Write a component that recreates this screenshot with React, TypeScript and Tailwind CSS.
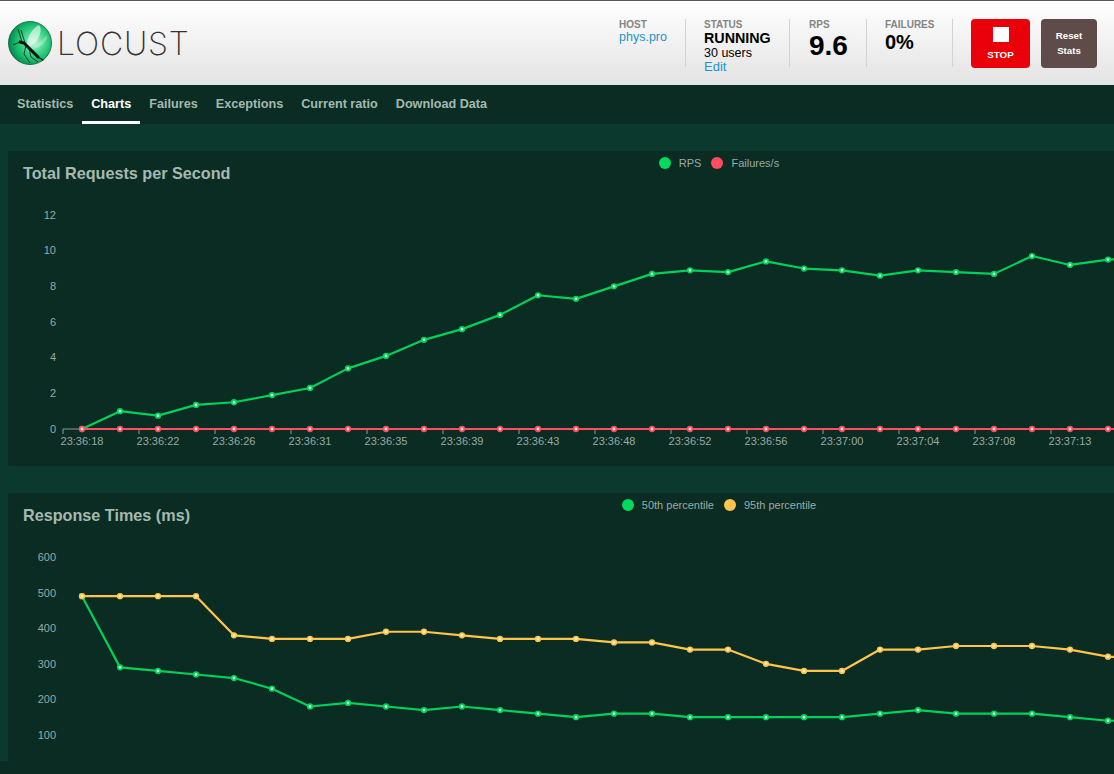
const tabs = ["Statistics", "Charts", "Failures", "Exceptions", "Current ratio", "Download Data"];

const rps = [0, 1, 0.75, 1.35, 1.5, 1.9, 2.3, 3.4, 4.1, 5, 5.6, 6.4, 7.5, 7.3, 8, 8.7, 8.9, 8.8, 9.4, 9, 8.9, 8.6, 8.9, 8.8, 8.7, 9.7, 9.2, 9.5, 9.6];
const failures = rps.map(() => 0);
const p50 = [490, 290, 280, 270, 260, 230, 180, 190, 180, 170, 180, 170, 160, 150, 160, 160, 150, 150, 150, 150, 150, 160, 170, 160, 160, 160, 150, 140, 140];
const p95 = [490, 490, 490, 490, 380, 370, 370, 370, 390, 390, 380, 370, 370, 370, 360, 360, 340, 340, 300, 280, 280, 340, 340, 350, 350, 350, 340, 320, 315];
const times = ["23:36:18", "23:36:22", "23:36:26", "23:36:31", "23:36:35", "23:36:39", "23:36:43", "23:36:48", "23:36:52", "23:36:56", "23:37:00", "23:37:04", "23:37:08", "23:37:13"];

const GREEN = "#00d15a";
const RED = "#ff4d5e";
const YELLOW = "#ffc54d";
const LABEL = "#9aa9a3";

const xAt = (i: number) => 82 + 38 * i;

function Series({ data, color, y, core }: { data: number[]; color: string; y: (v: number) => number; core: string }) {
  const points = data.map((v, i) => `${xAt(i)},${y(v)}`).join(" ");
  return (
    <g>
      <polyline points={points} fill="none" stroke={color} strokeWidth="2.2" strokeLinejoin="round" />
      {data.map((v, i) => (
        <circle key={i} cx={xAt(i)} cy={y(v)} r="2.3" fill={core} stroke={color} strokeWidth="1.7" />
      ))}
    </g>
  );
}

function Legend({ items }: { items: { label: string; color: string }[] }) {
  return (
    <div className="absolute left-0 right-0 top-[5.5px] flex justify-center gap-[10px] text-[11px] leading-[13px] text-[#9aaba3]">
      {items.map((item) => (
        <div key={item.label} className="flex items-center gap-[8px]">
          <svg width="12" height="12" viewBox="0 0 12 12">
            <circle cx="6" cy="6" r="6" fill={item.color} />
          </svg>
          <span>{item.label}</span>
        </div>
      ))}
    </div>
  );
}

function XAxis({ baseline }: { baseline: number }) {
  return (
    <g>
      <line x1="63" x2="1114" y1={baseline} y2={baseline} stroke="#8c9c95" strokeWidth="1" />
      {times.map((t, i) => (
        <g key={t}>
          <line x1={63 + 76 * i} x2={63 + 76 * i} y1={baseline} y2={baseline + 5} stroke="#8c9c95" strokeWidth="1" />
          <text x={xAt(i * 2)} y={baseline + 16} textAnchor="middle" fontSize="11" fill={LABEL}>
            {t}
          </text>
        </g>
      ))}
    </g>
  );
}

function RpsChart() {
  const y = (v: number) => 429 - v * 17.83;
  return (
    <svg className="block w-[1106px] h-[276px]" viewBox="8 190 1106 276">
      {[0, 2, 4, 6, 8, 10, 12].map((v) => (
        <text key={v} x="56" y={y(v) + 3.6} textAnchor="end" fontSize="11" fill={LABEL}>
          {v}
        </text>
      ))}
      <XAxis baseline={429} />
      <Series data={rps} color={GREEN} y={y} core="#b8ffd4" />
      <Series data={failures} color={RED} y={y} core="#ffe3e6" />
    </svg>
  );
}

function ResponseChart() {
  const y = (v: number) => 770.6 - v * 0.356;
  return (
    <svg className="block w-[1106px] h-[229px]" viewBox="8 532 1106 229">
      {[100, 200, 300, 400, 500, 600].map((v) => (
        <text key={v} x="56" y={y(v) + 4} textAnchor="end" fontSize="11" fill={LABEL}>
          {v}
        </text>
      ))}
      <Series data={p50} color={GREEN} y={y} core="#b8ffd4" />
      <Series data={p95} color={YELLOW} y={y} core="#fff0c4" />
    </svg>
  );
}

function LogoBall() {
  return (
    <svg width="46" height="46" viewBox="0 0 46 46" className="shrink-0">
      <defs>
        <radialGradient id="ball" cx="0.6" cy="0.48" r="0.62">
          <stop offset="0" stopColor="#c9f7dc" />
          <stop offset="0.35" stopColor="#4fdc96" />
          <stop offset="0.72" stopColor="#0fb765" />
          <stop offset="1" stopColor="#0a7a4f" />
        </radialGradient>
      </defs>
      <circle cx="23" cy="23" r="21.5" fill="url(#ball)" stroke="#0b5b3d" strokeWidth="0.8" />
      <path d="M20 24 C21 15 26 8 32 5 C36 9 33 20 23 27 Z" fill="#eafcf2" opacity="0.65" />
      <path d="M23 27 C29 25 36 20 40 15 C41 21 35 28 25 29 Z" fill="#d4f7e2" opacity="0.35" />
      <path d="M13 22 L17 23 L31 37" fill="none" stroke="#0c130f" strokeWidth="3" strokeLinecap="round" />
      <path d="M31 37 L36 40" fill="none" stroke="#0c130f" strokeWidth="1.3" strokeLinecap="round" />
      <g fill="none" stroke="#0c1a14" strokeWidth="0.8">
        <path d="M11 9 L15 22" />
        <path d="M14 10 L18 23" />
        <path d="M13 22 L6 25" />
        <path d="M19 25 L17 34 L23 43" />
        <path d="M22 28 L24 37 L31 42" />
      </g>
    </svg>
  );
}

function Stat({ label, className, children }: { label: string; className: string; children: React.ReactNode }) {
  return (
    <div className={`h-[48px] border-r border-[#d2d2d2] ${className}`}>
      <div className="text-[10px] leading-[12px] font-bold text-[#858585]">{label}</div>
      {children}
    </div>
  );
}

export default function App() {
  return (
    <div className="h-[774px] w-full overflow-hidden flex flex-col bg-[#0a2c23] font-['Liberation_Sans',Arial,sans-serif]">
      <header className="h-[85px] shrink-0 border-t border-[#5a5a5a] bg-gradient-to-b from-white to-[#e3e3e3] flex pt-[18px] text-black">
        <div className="flex items-start pl-[7px] pt-[1px]">
          <LogoBall />
          <span className="ml-[4px] mt-[4px] text-[32px] leading-[40px] font-extralight tracking-[0.85px] text-[#333333] font-['Inter',sans-serif]">
            LOCUST
          </span>
        </div>
        <div className="ml-auto flex items-start pr-[17px]">
          <Stat label="HOST" className="w-[67px]">
            <div className="text-[12.5px] leading-[12px] text-[#1b95c9]">phys.pro</div>
          </Stat>
          <Stat label="STATUS" className="w-[104px] pl-[18px]">
            <div className="text-[14.3px] leading-[15px] font-bold">RUNNING</div>
            <div className="text-[12.5px] leading-[14px]">30 users</div>
            <div className="text-[13px] leading-[14px] text-[#1b95c9]">Edit</div>
          </Stat>
          <Stat label="RPS" className="w-[77px] pl-[19px]">
            <div className="text-[28px] leading-[30px] font-bold">9.6</div>
          </Stat>
          <Stat label="FAILURES" className="w-[86px] pl-[18px]">
            <div className="text-[20px] leading-[22px] font-bold">0%</div>
          </Stat>
          <button className="ml-[18px] w-[59px] h-[49px] rounded-[4px] bg-[#ea0008] text-white flex flex-col items-center pt-[8px]">
            <span className="block w-[16px] h-[15px] bg-white" />
            <span className="text-[9.8px] leading-[12px] font-bold mt-[7px]">STOP</span>
          </button>
          <button className="ml-[11px] w-[56px] h-[49px] pb-[2px] rounded-[4px] bg-[#5e4b4a] text-white text-[9.7px] leading-[15px] font-bold">
            Reset
            <br />
            Stats
          </button>
        </div>
      </header>

      <nav className="h-[39px] shrink-0 bg-[#0a2c23] flex pl-2">
        {tabs.map((tab) => (
          <div
            key={tab}
            className={
              tab === "Charts"
                ? "h-full px-[9px] pt-[12px] text-[12.65px] leading-[14px] font-bold text-white border-b-[3px] border-white"
                : "h-full px-[9px] pt-[12px] text-[12.65px] leading-[14px] font-bold text-[#a3b9af]"
            }
          >
            {tab}
          </div>
        ))}
      </nav>

      <main className="h-[637px] shrink-0 overflow-hidden bg-[#0b392d] pl-2 pt-[27px] flex flex-col gap-[27px]">
        <section className="relative w-[1422px] h-[315px] shrink-0 rounded-l-[3px] bg-[#0a2c23]">
          <Legend
            items={[
              { label: "RPS", color: "#00d95f" },
              { label: "Failures/s", color: RED },
            ]}
          />
          <h2 className="h-[39px] pl-[15px] pt-[13px] text-[16.2px] leading-[19px] font-bold text-[#a5b9b0]">
            Total Requests per Second
          </h2>
          <RpsChart />
        </section>
        <section className="relative w-[1422px] h-[268px] shrink-0 rounded-l-[3px] bg-[#0a2c23]">
          <Legend
            items={[
              { label: "50th percentile", color: "#00d95f" },
              { label: "95th percentile", color: YELLOW },
            ]}
          />
          <h2 className="h-[39px] pl-[15px] pt-[13px] text-[16.2px] leading-[19px] font-bold text-[#a5b9b0]">
            Response Times (ms)
          </h2>
          <ResponseChart />
        </section>
      </main>
    </div>
  );
}
